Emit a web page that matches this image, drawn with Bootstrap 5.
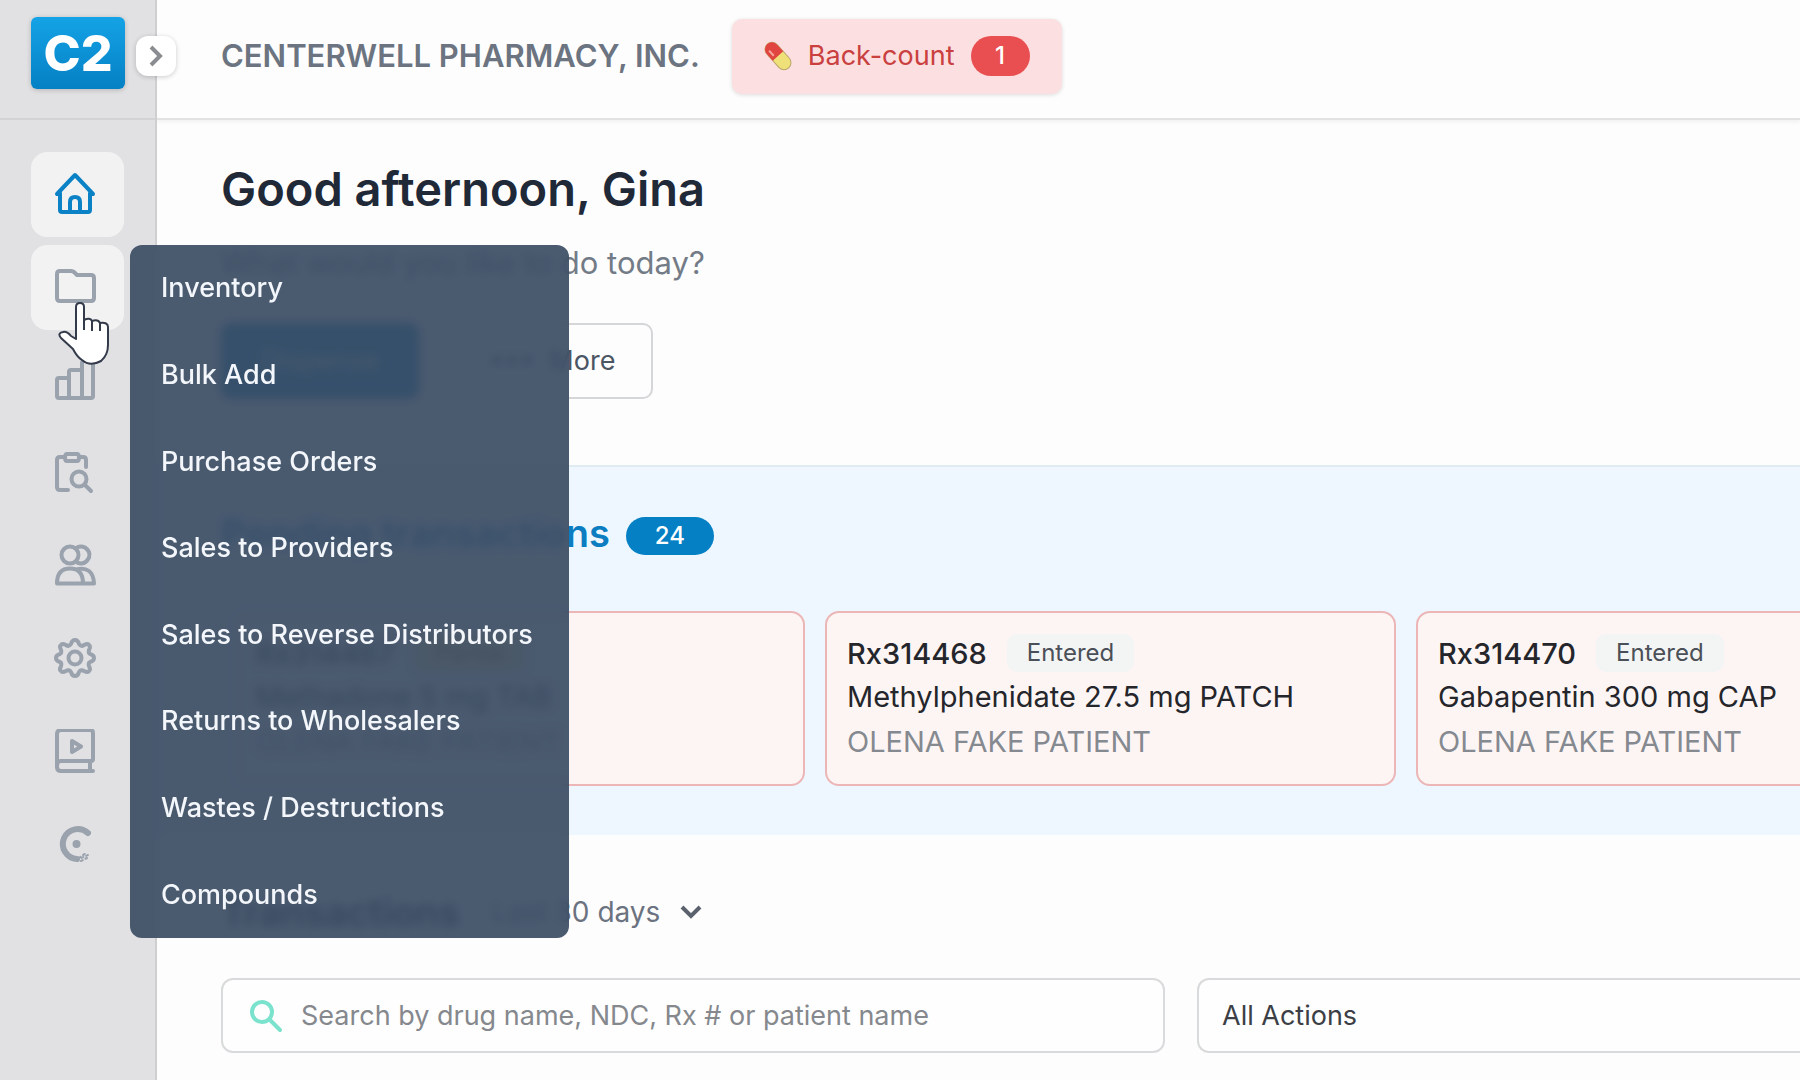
<!DOCTYPE html>
<html lang="en">
<head>
<meta charset="utf-8">
<meta name="viewport" content="width=device-width, initial-scale=1">
<title>C2 – Centerwell Pharmacy</title>
<link href="https://cdn.jsdelivr.net/npm/bootstrap@5.3.0/dist/css/bootstrap.min.css" rel="stylesheet">
<style>
  body { font-family: Inter, "Liberation Sans", sans-serif; font-size: 27px; line-height: 40px; background: #fdfdfd; color: #1f2937; overflow-x: hidden; }
  .side { width: 157px; background: #e1e1e4; border-right: 2px solid #cfcfd2; z-index: 10; }
  .side-top, .topbar { height: 120px; }
  .side-top { border-bottom: 2px solid #d3d3d6; padding: 17px 0 0 31px; }
  .logo { width: 94px; height: 72px; border-radius: 6px; background: linear-gradient(#14a3e6, #0580c4); color: #fff; font-size: 50px; font-weight: 800; line-height: 72px; box-shadow: 0 1px 5px #0003; }
  .expand { left: 136px; top: 36px; width: 40px; height: 40px; border-radius: 12px; background: #fff; box-shadow: 0 1px 5px #0003; }
  .side-nav { padding: 32px 31px 0; gap: 8px; }
  .tile { width: 93px; height: 85px; border-radius: 16px; color: #9aa2ad; padding: 0 6px 4px 0; }
  .tile.lit { background: #f2f2f3; }
  .tile.now { color: #0b82c6; }
  .tile svg { width: 44px; height: 44px; fill: none; stroke: currentColor; stroke-width: 4; stroke-linejoin: round; stroke-linecap: round; }
  .flyout { left: 99px; top: 0; width: 439px; height: 693px; border-radius: 12px; background: rgba(59,76,99,.92); backdrop-filter: blur(5px); overflow: hidden; }
  .flyout a { flex: 1 1 0; color: #f3f6fa; font-weight: 500; padding: 0 31px; white-space: nowrap; }
  .hand { left: 27px; top: 56px; width: 52px; height: 64px; z-index: 3; pointer-events: none; }
  .topbar { border-bottom: 2px solid #e2e2e3; box-shadow: 0 2px 4px #0000000d; padding: 0 64px 6px; gap: 32px; }
  .org { font-size: 31px; font-weight: 600; color: #6b7480; }
  .backcount { height: 75px; padding: 0 32px; border: 0; border-radius: 10px; background: #fcdfe0; color: #c9403f; box-shadow: 0 1px 4px #0002; gap: 16px; }
  .count { display: inline-block; border-radius: 20px; color: #fff; font-weight: 500; text-align: center; }
  .count-red { width: 59px; background: #e94f50; font-size: 24px; }
  .count-blue { width: 88px; background: #0580c4; font-size: 24px; line-height: 38px; margin-top: 6px; }
  .pad { padding-left: 64px; padding-right: 64px; }
  .intro { padding-top: 37px; padding-bottom: 66px; }
  .hello { font-size: 47px; line-height: 64px; font-weight: 600; margin: 0 0 22px; }
  .ask { font-size: 31px; color: #737b87; margin: 0 0 40px; }
  .act { height: 76px; border-radius: 10px; border: 2px solid #d5d6d8; background: #fdfdfd; color: #4b5563; }
  .act-main { width: 198px; background: #0277c0; border-color: #0277c0; color: #fff; }
  .act-more { width: 202px; }
  .pending { background: #eef7ff; border-top: 2px solid #e0eaf1; padding-top: 44px; padding-bottom: 49px; overflow: hidden; }
  .sect { font-size: 38px; line-height: 44px; font-weight: 600; margin: 0; }
  .pending .sect { color: #0b7dc0; }
  .rail { gap: 20px; margin-top: 56px; padding-left: 77px; }
  .rx { flex: 0 0 571px; height: 175px; border: 2px solid #ecb6b7; border-radius: 14px; background: #fdf5f4; padding: 19px 20px; font-size: 29px; line-height: 45px; color: #24262b; }
  .rx-top { height: 42px; gap: 20px; }
  .rx-id { font-weight: 500; }
  .state { background: #f3f4f4; border-radius: 10px; font-size: 24px; line-height: 38px; padding: 0 20px; color: #4b4f57; }
  .state-warn { background: #fde9a8; color: #8a5a10; }
  .who { color: #858990; }
  .tx { padding-top: 55px; }
  .tx .sect { color: #1f2937; }
  .heading-row { gap: 32px; }
  .period { color: #6b7280; gap: 20px; font-size: 28px; line-height: 40px; }
  .filters { padding-left: 64px; gap: 32px; margin-top: 44px; }
  .field { height: 75px; border: 2px solid #d9dadb; border-radius: 12px; background: #fefefe; }
  .find { flex: 0 1 944px; padding: 0 26px; gap: 18px; }
  .find input { border: 0; outline: 0; background: transparent; min-width: 0; padding: 0; }
  .find input::placeholder { color: #85888d; opacity: 1; }
  .kind { flex: 1 1 0; appearance: none; border-right: 0; border-radius: 12px 0 0 12px; padding: 0 23px; color: #3c3f45; }
</style>
</head>
<body>
<div class="d-flex min-vh-100">
  <aside class="side position-relative flex-shrink-0">
    <div class="side-top"><div class="logo text-center">C2</div></div>
    <button class="expand btn position-absolute p-0 d-flex align-items-center justify-content-center" aria-label="Expand menu">
      <svg width="14" height="22" viewBox="0 0 14 22" fill="none" stroke="#8a8d92" stroke-width="4"><path d="M2 2l9 9-9 9"/></svg>
    </button>
    <nav class="side-nav d-flex flex-column" aria-label="Main">
      <a href="#" class="tile lit now d-flex align-items-center justify-content-center" aria-label="Home">
        <svg viewBox="0 0 44 44"><path d="M4 23h3M37 23h3M4 23L22 4l18 19M7 22v17q0 2 2 2h26q2 0 2-2V22M17 40V31q0-5 5-5t5 5v9"/></svg></a>
      <div class="position-relative">
        <a href="#" class="tile lit d-flex align-items-center justify-content-center" aria-label="Drugs">
          <svg viewBox="0 0 44 44"><path d="M7 7h11q2 0 3 1l3 3h14q3 0 3 3v20q0 3-3 3H7q-3 0-3-3V10q0-3 3-3z"/></svg></a>
        <div class="flyout position-absolute d-flex flex-column">
          <a href="#" class="d-flex align-items-center text-decoration-none">Inventory</a>
          <a href="#" class="d-flex align-items-center text-decoration-none">Bulk Add</a>
          <a href="#" class="d-flex align-items-center text-decoration-none">Purchase Orders</a>
          <a href="#" class="d-flex align-items-center text-decoration-none">Sales to Providers</a>
          <a href="#" class="d-flex align-items-center text-decoration-none">Sales to Reverse Distributors</a>
          <a href="#" class="d-flex align-items-center text-decoration-none">Returns to Wholesalers</a>
          <a href="#" class="d-flex align-items-center text-decoration-none">Wastes / Destructions</a>
          <a href="#" class="d-flex align-items-center text-decoration-none">Compounds</a>
        </div>
        <svg class="hand position-absolute" viewBox="0 0 52 64" fill="#fff" stroke="#333a4a" stroke-width="2" stroke-linejoin="round"><path d="M18 38V6q0-4 4-4t4 4v13q6-3 8 1 6-2 8 2 8-1 8 4v18q0 10-7 16-11 6-19-1-5-3-9-11L3 37Q-1 32 5 31q4-1 8 4z"/><path d="M26 19v10M34 20v10M42 22v8" fill="none"/></svg>
      </div>
      <a href="#" class="tile d-flex align-items-center justify-content-center" aria-label="Reports">
        <svg viewBox="0 0 44 44"><path d="M16 41H6q-2 0-2-2V23q0-2 2-2h10M16 41V15q0-2 2-2h11M16 41h13M29 41V6q0-2 2-2h7q2 0 2 2v33q0 2-2 2z"/></svg></a>
      <a href="#" class="tile d-flex align-items-center justify-content-center" aria-label="Audits">
        <svg viewBox="0 0 44 44"><path d="M12 7H7q-3 0-3 3v27q0 3 3 3h8M26 7h4q3 0 3 3v7M14 4h10q2 0 2 3.500T24 11H14q-2 0-2-3.500T14 4zM32 35l6 6"/><circle cx="26" cy="29" r="7.500"/></svg></a>
      <a href="#" class="tile d-flex align-items-center justify-content-center" aria-label="People">
        <svg viewBox="0 0 44 44"><circle cx="17" cy="12" r="8.500"/><path d="M24 4.500q4-2 8 0 6 4 4 10-3 6-8 6-3 0-5-2M4 40.500q0-15 13-15t13 15zM23 26.500q17-4 18 14H30"/></svg></a>
      <a href="#" class="tile d-flex align-items-center justify-content-center" aria-label="Settings">
        <svg viewBox="0 0 44 44"><circle cx="22" cy="22" r="6.500"/><path d="M22 4q3 0 4 4 2 3 5 1 4-2 5 0 2 1 0 5-1 3 1 4 4 1 4 4t-4 4q-2 1-1 4 2 4 0 5-1 2-5 0-3-2-5 1-1 4-4 4t-4-4q-2-3-5-1-4 2-5 0-2-1 0-5 1-3-1-4-4-1-4-4t4-4q2-1 1-4-2-4 0-5 1-2 5 0 3 2 5-1 1-4 4-4z"/></svg></a>
      <a href="#" class="tile d-flex align-items-center justify-content-center" aria-label="Training">
        <svg viewBox="0 0 44 44"><path d="M40 42H8q-4 0-4-4V5q0-4 4-4h29q3 0 3 3v26q0 2-2 2H8q-4 0-4 5M37 33v8M19 12v11l9-5.500z"/></svg></a>
      <a href="#" class="tile d-flex align-items-center justify-content-center" aria-label="Support">
        <svg viewBox="0 0 44 44"><path d="M35 11A15 15 0 1 0 24 37" stroke-width="6"/><circle cx="23.500" cy="22" r="4" fill="currentColor" stroke="none"/><path d="M24 38l11-5M28 39l6-3M26 36l7-5" stroke-width="2" stroke-dasharray="2 3"/></svg></a>
    </nav>
  </aside>

  <main class="flex-fill overflow-hidden">
    <header class="topbar d-flex align-items-center">
      <div class="org text-nowrap">CENTERWELL PHARMACY, INC.</div>
      <button class="backcount d-flex align-items-center text-nowrap">
        <svg width="28" height="32" viewBox="0 0 28 32"><g transform="rotate(-42 14 16)"><rect x="7" y="0" width="14" height="32" rx="7" fill="#efe07a" stroke="#b9a768"/><path d="M7 16V7a7 7 0 0 1 14 0v9z" fill="#e0453f"/><path d="M11 6v7" stroke="#f7a59c" stroke-width="2"/></g></svg>
        <span>Back-count</span><span class="count count-red">1</span>
      </button>
    </header>

    <section class="pad intro">
      <h1 class="hello">Good afternoon, Gina</h1>
      <p class="ask">What would you like to do today?</p>
      <div class="d-flex heading-row">
        <button class="act act-main">Dispense</button>
        <button class="act act-more">•••&nbsp; More</button>
      </div>
    </section>

    <section class="pending">
      <div class="pad d-flex align-items-center gap-3">
        <h2 class="sect">Pending transactions</h2><span class="count count-blue">24</span>
      </div>
      <div class="rail d-flex text-nowrap">
        <article class="rx">
          <div class="rx-top d-flex align-items-center"><span class="rx-id">Rx314467</span><span class="state state-warn">Partial</span></div>
          <div>Methadone 5 mg TAB</div><div class="who">OLENA FAKE PATIENT</div>
        </article>
        <article class="rx">
          <div class="rx-top d-flex align-items-center"><span class="rx-id">Rx314468</span><span class="state">Entered</span></div>
          <div>Methylphenidate 27.5 mg PATCH</div><div class="who">OLENA FAKE PATIENT</div>
        </article>
        <article class="rx">
          <div class="rx-top d-flex align-items-center"><span class="rx-id">Rx314470</span><span class="state">Entered</span></div>
          <div>Gabapentin 300 mg CAP</div><div class="who">OLENA FAKE PATIENT</div>
        </article>
      </div>
    </section>

    <section class="tx">
      <div class="pad d-flex align-items-center heading-row">
        <h2 class="sect">Transactions</h2>
        <button class="period btn p-0 border-0 d-flex align-items-center">Last 30 days
          <svg width="22" height="14" viewBox="0 0 22 14" fill="none" stroke="#5b626e" stroke-width="4"><path d="M2 2l9 9 9-9"/></svg></button>
      </div>
      <div class="filters d-flex">
        <div class="field find d-flex align-items-center">
          <svg width="34" height="34" viewBox="0 0 34 34" fill="none" stroke="#7be3cd" stroke-width="4" stroke-linecap="round"><circle cx="13" cy="13" r="10"/><path d="M21 21l10 10"/></svg>
          <input class="flex-fill" type="text" aria-label="Search transactions" placeholder="Search by drug name, NDC, Rx # or patient name">
        </div>
        <select class="field kind" aria-label="Action"><option>All Actions</option></select>
      </div>
    </section>
  </main>
</div>
<script src="https://cdn.jsdelivr.net/npm/bootstrap@5.3.0/dist/js/bootstrap.bundle.min.js"></script>
</body>
</html>
